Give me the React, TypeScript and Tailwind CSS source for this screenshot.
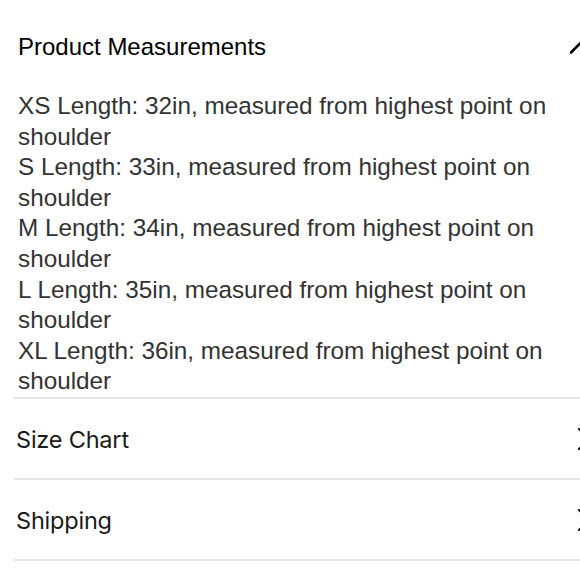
import React from "react";

const measurements = [
  { size: "XS", length: 32 },
  { size: "S", length: 33 },
  { size: "M", length: 34 },
  { size: "L", length: 35 },
  { size: "XL", length: 36 },
];

function ChevronRight() {
  return (
    <svg width="14" height="22" viewBox="0 0 14 22" fill="none" className="shrink-0">
      <path d="M3 1 L13 11 L3 21" stroke="#111" strokeWidth="2.2" strokeLinecap="round" strokeLinejoin="round" />
    </svg>
  );
}

function ChevronUp() {
  return (
    <svg width="20" height="13" viewBox="0 0 20 13" fill="none" className="shrink-0">
      <path d="M1 11.5 L10 2.5 L19 11.5" stroke="#000" strokeWidth="2.6" strokeLinecap="round" strokeLinejoin="round" />
    </svg>
  );
}

function AccordionRow({ title }: { title: string }) {
  return (
    <div className="flex items-center justify-between h-[81px] pl-[2px] pt-[2px] border-b-2 border-[#e4e4e4]">
      <span
        className="text-[23.5px] text-[#1a1a1a] tracking-[-0.2px]"
        style={{ fontFamily: "Inter, 'Noto Sans', sans-serif" }}
      >
        {title}
      </span>
      <ChevronRight />
    </div>
  );
}

export default function App() {
  return (
    <div className="w-[580px] h-[580px] overflow-hidden bg-white">
      <div className="w-[600px] pl-[14px] pr-[10px]">
        <div className="border-b-2 border-[#e4e4e4]">
          <div className="flex items-center justify-between pt-[32px] pl-[4px]">
            <h2
              className="text-[24px] leading-[30px] text-black"
              style={{ fontFamily: "'Liberation Sans', Arial, sans-serif" }}
            >
              Product Measurements
            </h2>
            <ChevronUp />
          </div>
          <div
            className="mt-[29px] pl-[4px] w-[556px] text-[24.3px] leading-[30.6px] text-[#333]"
            style={{ fontFamily: "'Liberation Sans', Arial, sans-serif" }}
          >
            {measurements.map((m) => (
              <p key={m.size}>
                {m.size} Length: {m.length}in, measured from highest point on shoulder
              </p>
            ))}
          </div>
        </div>
        <AccordionRow title="Size Chart" />
        <AccordionRow title="Shipping" />
      </div>
    </div>
  );
}
